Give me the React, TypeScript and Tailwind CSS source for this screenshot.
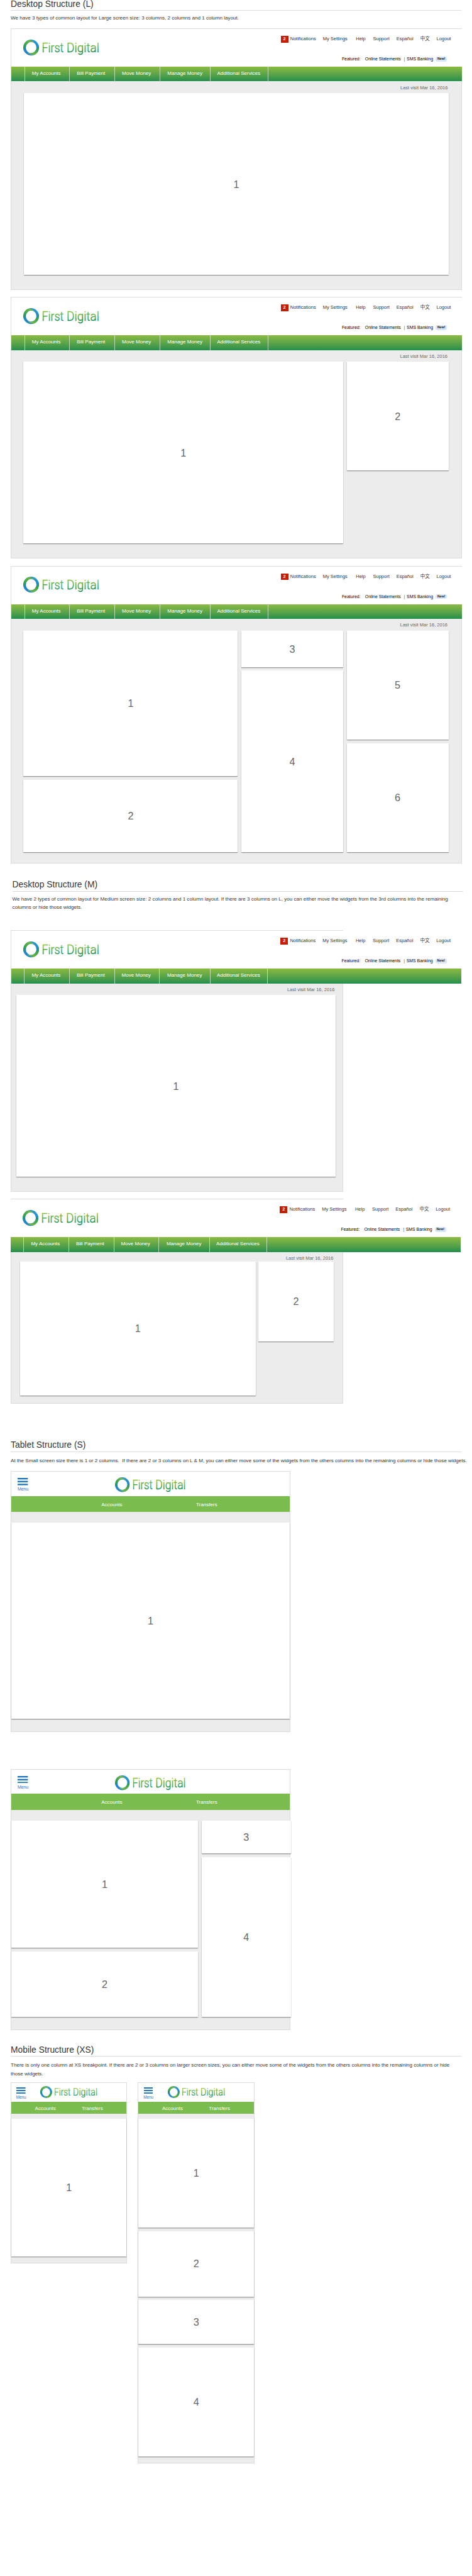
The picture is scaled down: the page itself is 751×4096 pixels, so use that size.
import React from "react";

function Logo({ id, className }: { id: string; className: string }) {
  return (
    <svg viewBox="0 0 210 45" className={className} overflow="visible" role="img" aria-label="First Digital">
      <defs>
        <linearGradient id={`${id}-text`} gradientUnits="userSpaceOnUse" x1="0" y1="8" x2="0" y2="36">
          <stop offset="0" stopColor="#86c232" />
          <stop offset="1" stopColor="#008c42" />
        </linearGradient>
        <linearGradient id={`${id}-blue`} x1="1" y1="0" x2="0" y2="1">
          <stop offset="0" stopColor="#29a8e0" />
          <stop offset="0.5" stopColor="#1b75c4" />
          <stop offset="1" stopColor="#2391d6" />
        </linearGradient>
        <linearGradient id={`${id}-green`} x1="1" y1="0" x2="0" y2="1">
          <stop offset="0" stopColor="#8cc63f" />
          <stop offset="1" stopColor="#109447" />
        </linearGradient>
      </defs>
      <g transform="scale(0.3333)">
        <path
          fillRule="evenodd"
          fill={`url(#${id}-blue)`}
          d="M65 0a65 66 0 1 0 0 132a65 66 0 1 0 0-132zM66 20a44 46 0 1 1-2 92a44 46 0 1 1 2-92z"
        />
        <path fill={`url(#${id}-green)`} d="M4 88C-6 50 12 14 42 4C62 4 84 10 95 26C70 12 40 18 28 42C14 55 8 70 4 88Z" />
        <path
          fill={`url(#${id}-green)`}
          transform="rotate(180 65 66)"
          d="M4 88C-6 50 12 14 42 4C62 4 84 10 95 26C70 12 40 18 28 42C14 55 8 70 4 88Z"
        />
      </g>
      <g
        fill={`url(#${id}-text)`}
        stroke={`url(#${id}-text)`}
        strokeWidth="0.5"
        fontFamily="Roboto, 'Open Sans', sans-serif"
        fontWeight="300"
        fontSize="36.5"
      >
        <text x="51" y="34.8" textLength="60.5" lengthAdjust="spacingAndGlyphs">First</text>
        <text x="120" y="34.8" textLength="90" lengthAdjust="spacingAndGlyphs">Digital</text>
      </g>
    </svg>
  );
}

function Heading({ children, className = "" }: { children: React.ReactNode; className?: string }) {
  return (
    <h2 className={`w-[717px] whitespace-nowrap border-b border-[#dcdcdc] pb-[5.8px] text-[13.87px] leading-[10px] text-[#333] ${className}`}>
      {children}
    </h2>
  );
}

function Intro({ children, className = "" }: { children: React.ReactNode; className?: string }) {
  return <p className={`whitespace-pre text-[8.09px] leading-[13.3px] text-[#333] ${className}`}>{children}</p>;
}

function Card({ n, className = "" }: { n: number; className?: string }) {
  return (
    <div
      className={`flex shrink-0 items-center justify-center bg-white text-[16.2px] leading-none text-[#666] shadow-[0_0.6px_1.2px_rgba(0,0,0,0.45)] ${className}`}
    >
      {n}
    </div>
  );
}

function DesktopHeader({ id, className = "" }: { id: string; className?: string }) {
  return (
    <div className={`w-[716.5px] ${className}`}>
      <header className="flex h-[60px] bg-white">
        <div className="w-[428.6px] pl-[19.4px] pt-[16.4px]">
          <Logo id={id} className="h-[25.9px] w-[121px]" />
        </div>
        <div className="pt-[10.8px]">
          <div className="flex h-[10.4px] whitespace-nowrap text-[7.5px] leading-[10.4px] text-[#333]">
            <span className="mr-[3px] w-[12.2px] bg-[#c91b00] text-center font-bold leading-[9.6px] text-white">2</span>
            <span className="w-[51.9px]">Notifications</span>
            <span className="w-[52.6px]">My Settings</span>
            <span className="w-[27.2px]">Help</span>
            <span className="w-[37.2px]">Support</span>
            <span className="w-[38.2px]">Español</span>
            <span className="w-[25.7px]">中文</span>
            <span>Logout</span>
          </div>
          <div className="mt-[22.5px] flex h-[7.5px] whitespace-nowrap pl-[97.3px] text-[6.93px] leading-[7.5px] text-black">
            <span className="w-[36.9px]">Featured:</span>
            <span className="w-[61.8px]">Online Statements</span>
            <span className="w-[4.5px] text-[#555]">|</span>
            <span className="w-[46.2px]">SMS Banking</span>
            <span className="w-[17.9px] rounded-[3px] bg-[#d6e6fb] text-center text-[5.2px] font-bold text-[#222]">New!</span>
          </div>
        </div>
      </header>
      <nav className="flex h-[23.1px] bg-linear-to-b from-[#8abb40] to-[#1f8f4c] pl-[20.6px] text-[8.09px] leading-[21.3px] whitespace-nowrap text-white">
        <span className="w-[71.9px] border-l border-white/60 pl-[11.2px]">My Accounts</span>
        <span className="w-[71.7px] border-l border-white/60 pl-[10.8px]">Bill Payment</span>
        <span className="w-[71.5px] border-l border-white/60 pl-[10.8px]">Move Money</span>
        <span className="w-[80.5px] border-l border-white/60 pl-[11.6px]">Manage Money</span>
        <span className="w-[92.4px] border-x border-white/60 pl-[10.3px]">Additional Services</span>
      </nav>
    </div>
  );
}

function LastVisit({ className }: { className: string }) {
  return <div className={`whitespace-nowrap pt-[4.3px] text-right text-[7.51px] leading-[11px] text-[#666] ${className}`}>Last visit Mar 16, 2016</div>;
}

function MenuBars({ className }: { className: string }) {
  return (
    <svg viewBox="0 0 28 20" preserveAspectRatio="none" fill="#1b75bc" className={className}>
      <rect width="28" height="4" />
      <rect y="8" width="28" height="4" />
      <rect y="16" width="28" height="4" />
    </svg>
  );
}

function TabletHeader({ id }: { id: string }) {
  return (
    <>
      <header className="flex h-[38.4px] bg-white">
        <div className="w-[164.5px] pl-[9.6px] pt-[9.8px]">
          <div className="flex w-[18px] flex-col items-center">
            <MenuBars className="h-[11.6px] w-[16.4px]" />
            <span className="mt-[2.6px] text-[6.93px] leading-[8px] text-[#1b75bc]">Menu</span>
          </div>
        </div>
        <div className="pt-[8.7px]">
          <Logo id={id} className="h-[24.1px] w-[112.6px]" />
        </div>
      </header>
      <nav className="flex h-[25.2px] bg-[#7abc4e] pl-[143.2px] text-[8.09px] leading-[28.4px] text-white">
        <span className="w-[150.8px]">Accounts</span>
        <span>Transfers</span>
      </nav>
    </>
  );
}

function MobileHeader({ id }: { id: string }) {
  return (
    <>
      <header className="flex h-[29.8px] bg-white">
        <div className="w-[46.3px] pl-[7.4px] pt-[7.3px]">
          <div className="flex w-[16.6px] flex-col items-center">
            <MenuBars className="h-[10.2px] w-[14.6px]" />
            <span className="mt-[1.9px] text-[6.35px] leading-[8px] text-[#1b75bc]">Menu</span>
          </div>
        </div>
        <div className="pt-[4.7px]">
          <Logo id={id} className="h-[19.6px] w-[91.1px]" />
        </div>
      </header>
      <nav className="flex h-[19.4px] bg-[#7abc4e] pl-[37.5px] text-[8.09px] leading-[21.4px] text-white">
        <span className="w-[74.4px]">Accounts</span>
        <span>Transfers</span>
      </nav>
    </>
  );
}

export default function App() {
  return (
    <div className="h-[4096px] w-[751px] overflow-hidden bg-white pl-[17px] pt-[0.5px] font-['Liberation_Sans','Noto_Sans_CJK_SC',sans-serif]">
      <Heading>Desktop Structure (L)</Heading>
      <Intro className="mt-[4.8px]">We have 3 types of common layout for Large screen size: 3 columns, 2 columns and 1 column layout.</Intro>

      <section className="mt-[10px] h-[415.7px] w-[718px] border border-[#dcdcdc] bg-[#ececec]">
        <DesktopHeader id="l1" />
        <LastVisit className="h-[18.8px] pr-[21.6px]" />
        <Card n={1} className="ml-[20px] h-[289px] w-[676px]" />
      </section>

      <section className="mt-[11.4px] h-[415.2px] w-[718px] border border-[#dcdcdc] bg-[#ececec]">
        <DesktopHeader id="l2" />
        <LastVisit className="h-[18.8px] pr-[22px]" />
        <div className="flex items-start gap-[5.7px] pl-[19.4px]">
          <Card n={1} className="h-[288.8px] w-[508.7px]" />
          <Card n={2} className="h-[173.1px] w-[161.9px]" />
        </div>
      </section>

      <section className="mt-[12.2px] h-[473px] w-[718px] border border-[#dcdcdc] bg-[#ececec]">
        <DesktopHeader id="l3" />
        <LastVisit className="h-[18.8px] pr-[22px]" />
        <div className="flex items-start gap-[5.6px] pl-[19.4px]">
          <div className="flex w-[341px] flex-col gap-[5.7px]">
            <Card n={1} className="h-[231.3px]" />
            <Card n={2} className="h-[115.4px]" />
          </div>
          <div className="flex w-[162.1px] flex-col gap-[5.7px]">
            <Card n={3} className="h-[57.8px]" />
            <Card n={4} className="h-[288.9px]" />
          </div>
          <div className="flex w-[161.9px] flex-col gap-[5.8px]">
            <Card n={5} className="h-[173.2px]" />
            <Card n={6} className="h-[173.2px]" />
          </div>
        </div>
      </section>

      <div className="ml-[2.6px] mt-[28.5px]">
        <Heading>Desktop Structure (M)</Heading>
        <Intro className="mt-[5px]">
          {"We have 2 types of common layout for Medium screen size: 2 columns and 1 column layout. If there are 3 columns on L, you can either move the widgets from the 3rd columns into the remaining\ncolumns or hide those widgets."}
        </Intro>
      </div>

      <section className="mt-[29.7px] h-[415.5px] w-[529px] border border-[#dcdcdc] bg-[#ececec]">
        <DesktopHeader id="m1" className="-ml-[0.4px]" />
        <LastVisit className="h-[18.8px] pr-[12.6px]" />
        <Card n={1} className="ml-[8.3px] h-[288.9px] w-[507.3px]" />
      </section>

      <section className="mt-[11.5px] h-[325.2px] w-[529px] border border-[#dcdcdc] bg-[#ececec]">
        <DesktopHeader id="m2" className="-ml-[1.4px]" />
        <LastVisit className="h-[15px] pr-[14.6px]" />
        <div className="flex items-start gap-[4.8px] pl-[13.6px]">
          <Card n={1} className="h-[213px] w-[375.1px]" />
          <Card n={2} className="h-[127.7px] w-[119.2px]" />
        </div>
      </section>

      <Heading className="mt-[60.5px]">Tablet Structure (S)</Heading>
      <Intro className="mt-[7.4px]">
        At the Small screen size there is 1 or 2 columns.{"  "}If there are 2 or 3 columns on L &amp; M, you can either move some of the widgets from the others columns into the remaining columns or hide those widgets.
      </Intro>

      <section className="mt-[9.7px] h-[415.2px] w-[445px] border border-[#dcdcdc] bg-[#ececec]">
        <TabletHeader id="t1" />
        <Card n={1} className="mt-[17px] h-[312.1px]" />
      </section>

      <section className="mt-[58.5px] h-[415.5px] w-[445px] border border-[#dcdcdc] bg-[#ececec]">
        <TabletHeader id="t2" />
        <div className="mt-[17.4px] flex w-[444.8px] items-start gap-[5.6px]">
          <div className="flex w-[297px] flex-col gap-[6px]">
            <Card n={1} className="h-[202px]" />
            <Card n={2} className="h-[103.9px]" />
          </div>
          <div className="flex w-[142.1px] flex-col gap-[5.8px]">
            <Card n={3} className="h-[51.8px]" />
            <Card n={4} className="h-[254.3px]" />
          </div>
        </div>
      </section>

      <Heading className="mt-[25.2px]">Mobile Structure (XS)</Heading>
      <Intro className="mt-[7px]">
        {"There is only one column at XS breakpoint. If there are 2 or 3 columns on larger screen sizes, you can either move some of the widgets from the others columns into the remaining columns or hide\nthose widgets."}
      </Intro>

      <div className="mt-[6.8px] flex items-start gap-[17px]">
        <section className="h-[288.3px] w-[185.4px] border border-[#dcdcdc] bg-[#ececec]">
          <MobileHeader id="x1" />
          <Card n={1} className="mt-[7.5px] h-[219.4px]" />
        </section>
        <section className="h-[606.1px] w-[185.6px] border border-[#dcdcdc] bg-[#ececec]">
          <MobileHeader id="x2" />
          <div className="mt-[7.5px] flex flex-col gap-[5.8px]">
            <Card n={1} className="h-[173.3px]" />
            <Card n={2} className="h-[103.9px]" />
            <Card n={3} className="h-[69.5px]" />
            <Card n={4} className="h-[173.4px]" />
          </div>
        </section>
      </div>
    </div>
  );
}
